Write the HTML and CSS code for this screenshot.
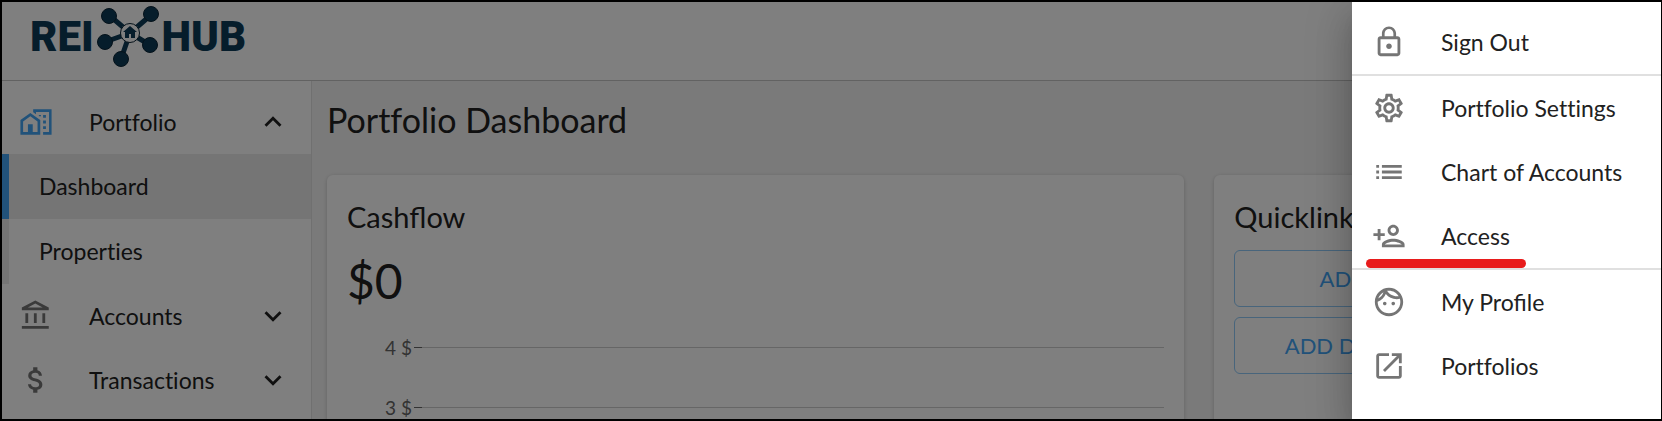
FILE: index.html
```html
<!DOCTYPE html>
<html lang="en">
  <head>
    <meta charset="UTF-8" />
    <title>REI Hub - Portfolio Dashboard</title>
    <meta name="viewport" content="width=device-width, initial-scale=1.0" />
    <link rel="stylesheet" href="styles.css">
  </head>
  <body>
    <div class="app">
      <header class="topbar">
        <a href="#" class="logo" aria-label="REI Hub">
          <span>REI</span>
          <svg class="logo-mark" viewBox="0 0 62 62">
            <g stroke="#0c3a57" stroke-width="5">
              <path d="M33 27L13 10M33 27L54 9M33 27L8 36M33 27L53 39M33 27L24 53" />
            </g>
            <g fill="#0c3a57" stroke="#0a2434">
              <circle cx="12" cy="10" r="7.5" />
              <circle cx="54" cy="8" r="7.5" />
              <circle cx="8" cy="36" r="7.5" />
              <circle cx="53" cy="39" r="7.5" />
              <circle cx="24" cy="53" r="7.5" />
            </g>
            <circle cx="33" cy="27" r="9.5" fill="#fff" stroke="#0a2434" />
            <path fill="#0c3a57" d="M33 20l-7 6h2v6h4v-4h2v4h4v-6h2z" />
          </svg>
          <span>HUB</span>
        </a>
      </header>

      <div class="layout">
        <nav class="sidebar">
          <button class="nav-row">
            <svg class="icon blue" viewBox="0 0 24 24"><path fill-rule="evenodd" d="M1 10.6V21h14V10.6L8 5.6zM2.9 19.1v-7.4L8 8l5.1 3.7v7.4z" /><path d="M6.3 13.5h3.4V20H6.3zM10 3v2.2l2 1.4V5h9.2v14H17v2h6V3zM17 7h2v2h-2zM17 11h2v2h-2zM17 15h2v2h-2zM14 7h1.5v1H14z" /></svg>
            <span>Portfolio</span>
            <svg class="icon chevron" viewBox="0 0 24 24"><path d="M12 8l-6 6 1.41 1.41L12 10.83l4.59 4.58L18 14z" /></svg>
          </button>
          <a href="#" class="sub-row active">Dashboard</a>
          <a href="#" class="sub-row">Properties</a>
          <button class="nav-row">
            <svg class="icon" viewBox="0 0 24 24"><path d="M6.5 10h-2v7h2v-7zm6 0h-2v7h2v-7zm8.5 9H2v2h19v-2zm-2.5-9h-2v7h2v-7zm-7-6.74L16.71 6H6.29l5.21-2.74m0-2.26L2 6v2h19V6l-9.5-5z" /></svg>
            <span>Accounts</span>
            <svg class="icon chevron" viewBox="0 0 24 24"><path d="M16.59 8.59L12 13.17 7.41 8.59 6 10l6 6 6-6z" /></svg>
          </button>
          <button class="nav-row">
            <svg class="icon" viewBox="0 0 24 24"><path d="M11.8 10.9c-2.27-.59-3-1.2-3-2.15 0-1.09 1.01-1.85 2.7-1.85 1.78 0 2.44.85 2.5 2.1h2.21c-.07-1.72-1.12-3.3-3.21-3.81V3h-3v2.16c-1.94.42-3.5 1.68-3.5 3.61 0 2.31 1.91 3.46 4.7 4.13 2.5.6 3 1.48 3 2.41 0 .69-.49 1.79-2.7 1.79-2.06 0-2.87-.92-2.98-2.1h-2.2c.12 2.19 1.76 3.42 3.68 3.83V21h3v-2.15c1.95-.37 3.5-1.5 3.5-3.55 0-2.84-2.43-3.81-4.7-4.4z" /></svg>
            <span>Transactions</span>
            <svg class="icon chevron" viewBox="0 0 24 24"><path d="M16.59 8.59L12 13.17 7.41 8.59 6 10l6 6 6-6z" /></svg>
          </button>
        </nav>

        <main class="content">
          <h1>Portfolio Dashboard</h1>
          <div class="cards">
            <section class="card">
              <h2 class="liga">Cashflow</h2>
              <p class="amount">$0</p>
              <div class="chart">
                <div class="tick"><span>4 $</span></div>
                <div class="tick"><span>3 $</span></div>
              </div>
            </section>
            <section class="card">
              <h2>Quicklinks</h2>
              <button class="link-btn">Add Transactions</button>
              <button class="link-btn">Add Document Uploads</button>
            </section>
          </div>
        </main>
      </div>

      <div class="backdrop"></div>

      <aside class="drawer">
        <a href="#" class="menu-item">
          <svg class="icon" viewBox="0 0 24 24"><path d="M12 17c1.1 0 2-.9 2-2s-.9-2-2-2-2 .9-2 2 .9 2 2 2zm6-9h-1V6c0-2.76-2.24-5-5-5S7 3.24 7 6v2H6c-1.1 0-2 .9-2 2v10c0 1.1.9 2 2 2h12c1.1 0 2-.9 2-2V10c0-1.1-.9-2-2-2zM8.9 6c0-1.71 1.39-3.1 3.1-3.1s3.1 1.39 3.1 3.1v2H8.9V6zM18 20H6V10h12v10z" /></svg>
          <span>Sign Out</span>
        </a>
        <hr>
        <a href="#" class="menu-item">
          <svg class="icon" viewBox="0 0 24 24"><path d="M19.43 12.98c.04-.32.07-.64.07-.98 0-.34-.03-.66-.07-.98l2.11-1.65c.19-.15.24-.42.12-.64l-2-3.46c-.09-.16-.26-.25-.44-.25-.06 0-.12.01-.17.03l-2.49 1c-.52-.4-1.08-.73-1.69-.98l-.38-2.65C14.46 2.18 14.25 2 14 2h-4c-.25 0-.46.18-.49.42l-.38 2.65c-.61.25-1.17.59-1.69.98l-2.49-1c-.06-.02-.12-.03-.18-.03-.17 0-.34.09-.43.25l-2 3.46c-.13.22-.07.49.12.64l2.11 1.65c-.04.32-.07.65-.07.98 0 .33.03.66.07.98l-2.11 1.65c-.19.15-.24.42-.12.64l2 3.46c.09.16.26.25.44.25.06 0 .12-.01.17-.03l2.49-1c.52.4 1.08.73 1.69.98l.38 2.65c.03.24.24.42.49.42h4c.25 0 .46-.18.49-.42l.38-2.65c.61-.25 1.17-.59 1.69-.98l2.49 1c.06.02.12.03.18.03.17 0 .34-.09.43-.25l2-3.46c.12-.22.07-.49-.12-.64l-2.11-1.65zm-1.98-1.71c.04.31.05.52.05.73 0 .21-.02.43-.05.73l-.14 1.13.89.7 1.08.84-.7 1.21-1.27-.51-1.04-.42-.9.68c-.43.32-.84.56-1.25.73l-1.06.43-.16 1.13-.2 1.35h-1.4l-.19-1.35-.16-1.13-1.06-.43c-.43-.18-.83-.41-1.23-.71l-.91-.7-1.06.43-1.27.51-.7-1.21 1.08-.84.89-.7-.14-1.13c-.03-.31-.05-.54-.05-.74s.02-.43.05-.73l.14-1.13-.89-.7-1.08-.84.7-1.21 1.27.51 1.04.42.9-.68c.43-.32.84-.56 1.25-.73l1.06-.43.16-1.13.2-1.35h1.39l.19 1.35.16 1.13 1.06.43c.43.18.83.41 1.23.71l.91.7 1.06-.43 1.27-.51.7 1.21-1.07.85-.89.7.14 1.13zM12 8c-2.21 0-4 1.79-4 4s1.79 4 4 4 4-1.79 4-4-1.79-4-4-4zm0 6c-1.1 0-2-.9-2-2s.9-2 2-2 2 .9 2 2-.9 2-2 2z" /></svg>
          <span>Portfolio Settings</span>
        </a>
        <a href="#" class="menu-item">
          <svg class="icon" viewBox="0 0 24 24"><path d="M3 13h2v-2H3v2zm0 4h2v-2H3v2zm0-8h2V7H3v2zm4 4h14v-2H7v2zm0 4h14v-2H7v2zM7 7v2h14V7H7z" /></svg>
          <span>Chart of Accounts</span>
        </a>
        <a href="#" class="menu-item marked">
          <svg class="icon" viewBox="0 0 24 24"><path d="M15 12c2.21 0 4-1.79 4-4s-1.79-4-4-4-4 1.79-4 4 1.79 4 4 4zm0-6c1.1 0 2 .9 2 2s-.9 2-2 2-2-.9-2-2 .9-2 2-2zm0 8c-2.67 0-8 1.34-8 4v2h16v-2c0-2.66-5.33-4-8-4zm-6 4c.22-.72 3.31-2 6-2 2.7 0 5.8 1.29 6 2H9zm-3-3v-3h3v-2H6V7H4v3H1v2h3v3z" /></svg>
          <span>Access</span>
        </a>
        <hr>
        <a href="#" class="menu-item">
          <svg class="icon" viewBox="0 0 24 24"><path d="M10.25 13c0 .69-.56 1.25-1.25 1.25S7.75 13.69 7.75 13s.56-1.25 1.25-1.25 1.25.56 1.25 1.25zM15 11.75c-.69 0-1.25.56-1.25 1.25s.56 1.25 1.25 1.25 1.25-.56 1.25-1.25-.56-1.25-1.25-1.25zm7 .25c0 5.52-4.48 10-10 10S2 17.52 2 12 6.48 2 12 2s10 4.48 10 10zM10.66 4.12C12.06 6.44 14.6 8 17.5 8c.46 0 .91-.05 1.34-.12C17.44 5.56 14.9 4 12 4c-.46 0-.91.05-1.34.12zM4.42 9.47c1.71-.97 3.03-2.55 3.66-4.44C6.37 6 5.05 7.58 4.42 9.47zM20 12c0-.78-.12-1.53-.33-2.24-.7.15-1.42.24-2.17.24-3.13 0-5.92-1.44-7.76-3.69C8.69 8.87 6.6 10.88 4 11.86c.01.04 0 .09 0 .14 0 4.41 3.59 8 8 8s8-3.59 8-8z" /></svg>
          <span class="liga">My Profile</span>
        </a>
        <a href="#" class="menu-item">
          <svg class="icon" viewBox="0 0 24 24"><path d="M19 19H5V5h7V3H5c-1.11 0-2 .9-2 2v14c0 1.1.89 2 2 2h14c1.1 0 2-.9 2-2v-7h-2v7zM14 3v2h3.59l-9.83 9.83 1.41 1.41L19 6.41V10h2V3h-7z" /></svg>
          <span>Portfolios</span>
        </a>
      </aside>
    </div>
  </body>
</html>
```
FILE: styles.css
```css
* {
  box-sizing: border-box;
}

body {
  margin: 0;
  font-family: Lato, sans-serif;
  font-size: 23px;
  font-variant-ligatures: no-common-ligatures;
  color: #212121;
}

.liga {
  font-variant-ligatures: normal;
}

.app {
  position: relative;
  display: flex;
  flex-direction: column;
  height: 100vh;
  overflow: hidden;
  border: 2px solid #000;
  border-right-width: 1px;
  background: #fff;
}

.topbar {
  flex: none;
  height: 79px;
  padding: 4px 28px;
  border-bottom: 1px solid #c4c4c4;
}

.logo {
  display: inline-flex;
  align-items: center;
  gap: 3px;
  color: #0c3a57;
  font-family: Roboto, sans-serif;
  font-size: 42px;
  font-weight: 900;
  line-height: 62px;
  text-decoration: none;
}

.logo-mark {
  width: 62px;
  height: 62px;
}

.layout {
  display: flex;
  flex: 1;
  min-height: 0;
}

.sidebar {
  flex: none;
  width: 310px;
  padding-top: 9px;
  border-right: 1px solid #e0e0e0;
}

.nav-row {
  display: flex;
  align-items: center;
  width: 100%;
  height: 64px;
  padding: 0 21px 0 17px;
  border: none;
  background: none;
  color: inherit;
  font: inherit;
  font-variant-ligatures: inherit;
  cursor: pointer;
}

.nav-row span {
  flex: 1;
  padding-left: 36px;
  text-align: left;
}

.icon {
  flex: none;
  width: 34px;
  height: 34px;
  fill: #757575;
}

.icon.blue {
  fill: #42a5f5;
}

.icon.chevron {
  fill: #212121;
}

.sub-row {
  display: block;
  padding-left: 30px;
  border-left: 7px solid #ebebeb;
  color: inherit;
  line-height: 65px;
  text-decoration: none;
}

.sub-row.active {
  border-color: #42a5f5;
  background: #ebebeb;
}

.content {
  flex: 1;
  padding: 14px 18px 0 15px;
  background: #f5f5f5;
}

h1,
h2,
p {
  margin: 0;
  font-weight: 400;
}

h1 {
  font-size: 34px;
  line-height: 50px;
}

.cards {
  display: grid;
  grid-template-columns: 2fr 1fr;
  gap: 30px;
  margin-top: 30px;
}

.card {
  padding: 20px;
  border-radius: 6px;
  background: #fff;
  box-shadow: 0 1px 4px rgba(0, 0, 0, 0.2);
}

h2 {
  margin-bottom: 12px;
  font-size: 29px;
  line-height: 43px;
}

.amount {
  font-size: 48px;
  line-height: 62px;
}

.chart {
  margin-top: 5px;
  padding-left: 38px;
}

.tick {
  display: flex;
  align-items: center;
  height: 60px;
  color: #666;
  font-size: 19px;
}

.tick span {
  margin-right: 2px;
}

.tick::before {
  content: "";
  order: 1;
  width: 8px;
  height: 1px;
  background: #666;
}

.tick::after {
  content: "";
  order: 2;
  flex: 1;
  height: 1px;
  background: #ccc;
}

.link-btn {
  display: block;
  width: 100%;
  height: 57px;
  border: 1px solid #90caf9;
  border-radius: 6px;
  background: none;
  color: #42a5f5;
  font: inherit;
  font-size: 22px;
  text-transform: uppercase;
  cursor: pointer;
}

.link-btn + .link-btn {
  margin-top: 10px;
}

.backdrop {
  position: absolute;
  inset: 0;
  background: rgba(0, 0, 0, 0.5);
}

.drawer {
  position: absolute;
  top: 0;
  right: 0;
  bottom: 0;
  width: 309px;
  padding-top: 8px;
  background: #fff;
  box-shadow: 0 11px 14px -7px rgba(0, 0, 0, 0.2),
    0 23px 34px 3px rgba(0, 0, 0, 0.14), 0 8px 43px 7px rgba(0, 0, 0, 0.12);
}

.drawer hr {
  height: 2px;
  margin: 0;
  border: none;
  background: #e0e0e0;
}

.menu-item {
  position: relative;
  display: flex;
  align-items: center;
  gap: 35px;
  height: 64px;
  padding-left: 20px;
  color: inherit;
  text-decoration: none;
}

/* red underline for the highlighted item */
.marked::after {
  content: "";
  position: absolute;
  bottom: 0;
  left: 14px;
  width: 160px;
  height: 9px;
  border-radius: 5px;
  background: #e81c1c;
}
```
